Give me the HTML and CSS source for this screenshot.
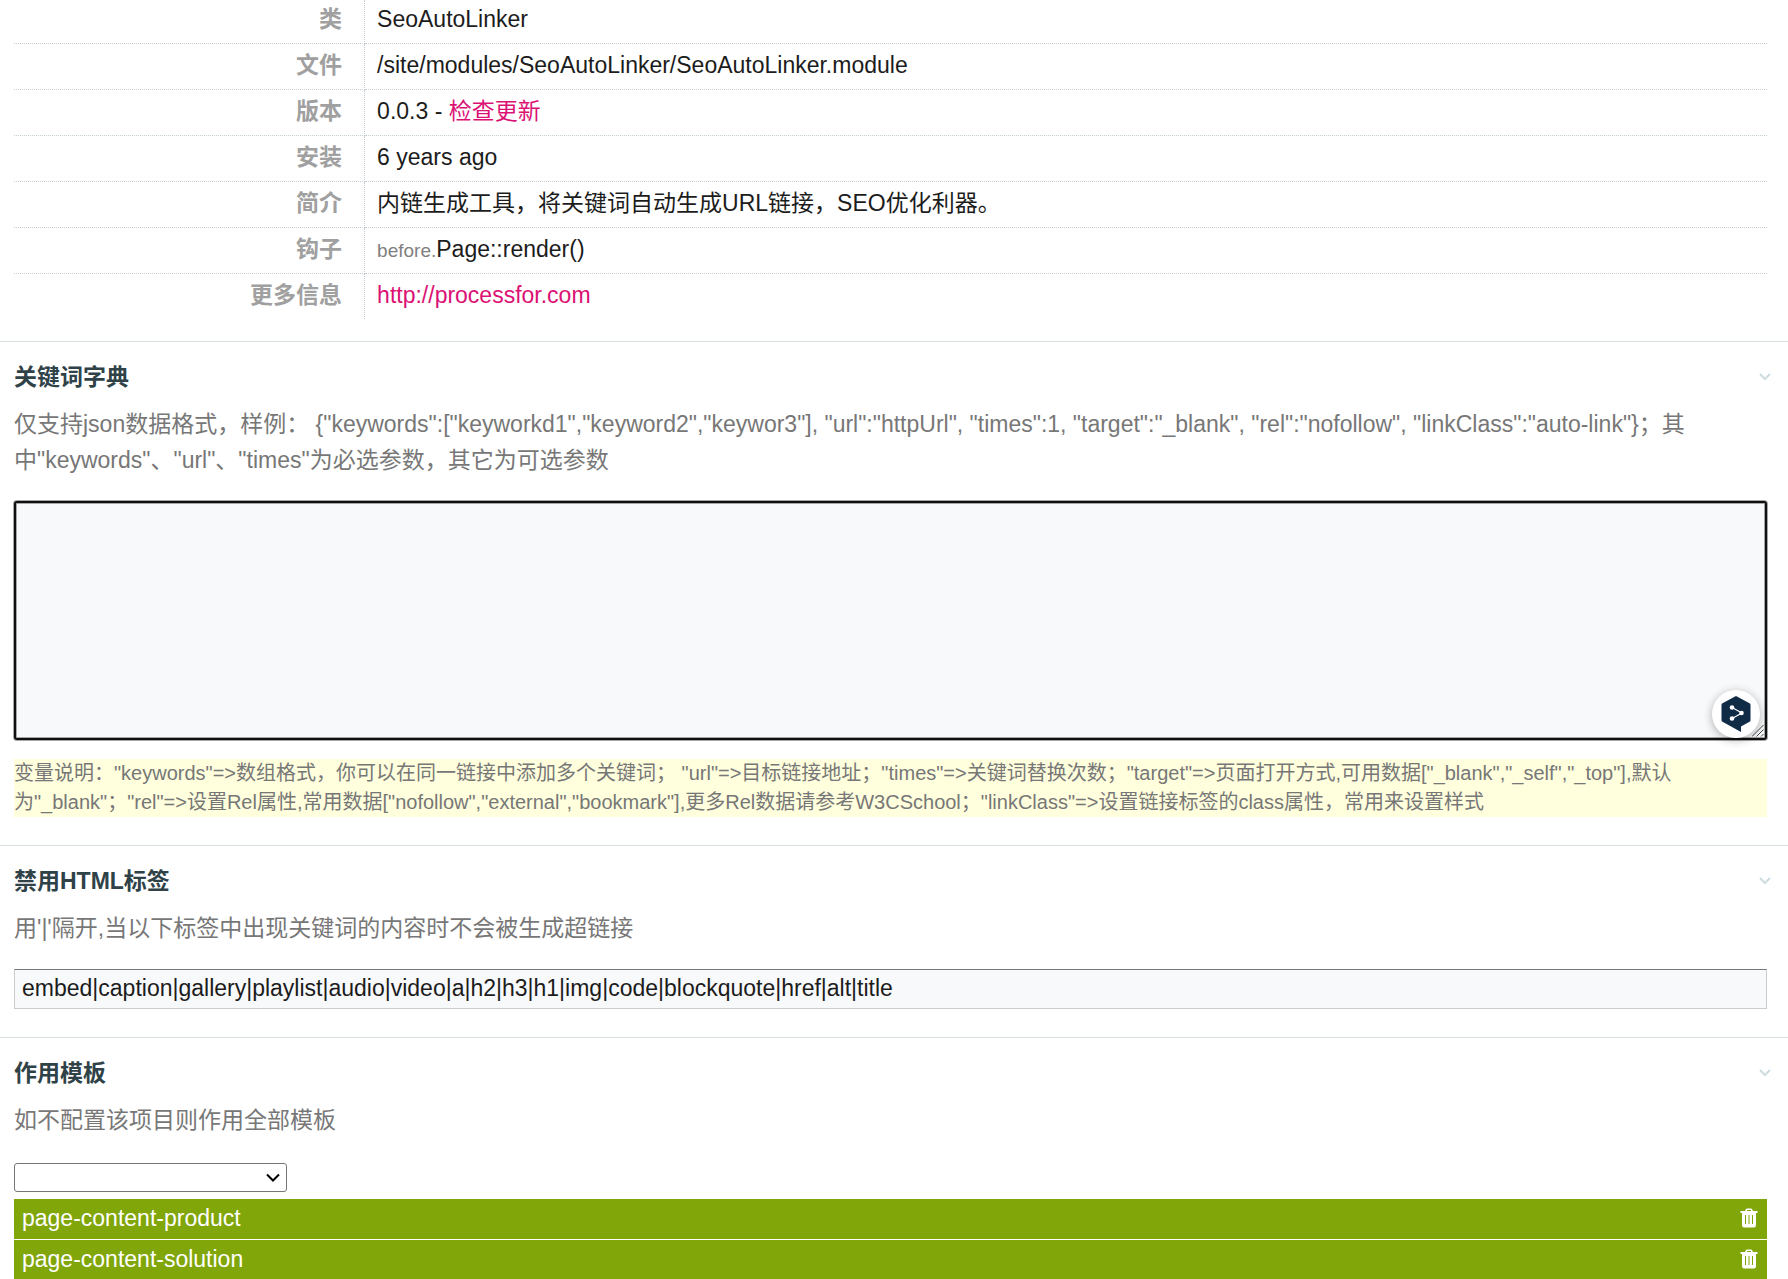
FILE: index.html
```html
<!DOCTYPE html>
<html lang="zh-CN">
<head>
<meta charset="utf-8">
<title>SeoAutoLinker</title>
<link rel="stylesheet" href="styles.css">
</head>
<body>
<main>
  <section class="info">
    <table class="info-table">
      <tbody>
        <tr><th scope="row">类</th><td>SeoAutoLinker</td></tr>
        <tr><th scope="row">文件</th><td>/site/modules/SeoAutoLinker/SeoAutoLinker.module</td></tr>
        <tr><th scope="row">版本</th><td>0.0.3 - <a href="#update">检查更新</a></td></tr>
        <tr><th scope="row">安装</th><td>6 years ago</td></tr>
        <tr><th scope="row">简介</th><td>内链生成工具，将关键词自动生成URL链接，SEO优化利器。</td></tr>
        <tr><th scope="row">钩子</th><td><span class="hook-type">before.</span>Page::render()</td></tr>
        <tr><th scope="row">更多信息</th><td><a href="http://processfor.com">http://processfor.com</a></td></tr>
      </tbody>
    </table>
  </section>

  <section class="field">
    <div class="field-head">
      <label for="keywords">关键词字典</label>
      <button class="toggle" type="button" aria-label="折叠"><svg viewBox="0 0 14 10" width="14" height="10"><path d="M2 2l5 5 5-5"/></svg></button>
    </div>
    <p class="description">仅支持json数据格式，样例： {"keywords":["keyworkd1","keyword2","keywor3"], "url":"httpUrl", "times":1, "target":"_blank", "rel":"nofollow", "linkClass":"auto-link"}；其中"keywords"、"url"、"times"为必选参数，其它为可选参数</p>
    <div class="editor">
      <textarea id="keywords"></textarea>
      <svg class="grip" viewBox="0 0 12 12" width="12" height="12"><path d="M0 11.500L11.500 0M4.500 11.500L11.500 4.500M9 11.500L11.500 9"/></svg>
      <button class="translate" type="button" aria-label="翻译">
        <svg viewBox="0 0 30 36" width="30" height="36"><path fill="#0f2b46" d="M15 0L29 7.500Q29.500 8 29.500 9V24Q29.500 25 29 25.500L20 30.500V36L11 31 1 25.500Q.5 25 .5 24V9Q.5 8 1 7.500Z"/><path d="M11 11.500L21 17 11 22.500" fill="none" stroke="#fff" stroke-width="1.200"/><g fill="#fff"><circle cx="11" cy="11.500" r="2.300"/><circle cx="20.500" cy="17" r="2.300"/><circle cx="11" cy="22.500" r="2.300"/></g></svg>
      </button>
    </div>
    <p class="notes">变量说明："keywords"=&gt;数组格式，你可以在同一链接中添加多个关键词； "url"=&gt;目标链接地址；"times"=&gt;关键词替换次数；"target"=&gt;页面打开方式,可用数据["_blank","_self","_top"],默认为"_blank"；"rel"=&gt;设置Rel属性,常用数据["nofollow","external","bookmark"],更多Rel数据请参考W3CSchool；"linkClass"=&gt;设置链接标签的class属性，常用来设置样式</p>
  </section>

  <section class="field">
    <div class="field-head">
      <label for="tags">禁用HTML标签</label>
      <button class="toggle" type="button" aria-label="折叠"><svg viewBox="0 0 14 10" width="14" height="10"><path d="M2 2l5 5 5-5"/></svg></button>
    </div>
    <p class="description">用'|'隔开,当以下标签中出现关键词的内容时不会被生成超链接</p>
    <input class="text-input" id="tags" type="text" value="embed|caption|gallery|playlist|audio|video|a|h2|h3|h1|img|code|blockquote|href|alt|title">
  </section>

  <section class="field field-last">
    <div class="field-head">
      <label for="templates">作用模板</label>
      <button class="toggle" type="button" aria-label="折叠"><svg viewBox="0 0 14 10" width="14" height="10"><path d="M2 2l5 5 5-5"/></svg></button>
    </div>
    <p class="description">如不配置该项目则作用全部模板</p>
    <div class="template-select">
      <select id="templates"><option></option></select>
      <svg viewBox="0 0 14 10" width="14" height="10"><path d="M1 1.500l6 6 6-6"/></svg>
    </div>
    <ul class="selected">
      <li>page-content-product <button class="remove" type="button" aria-label="删除"><svg viewBox="0 0 18 20" width="18" height="20"><use href="#trash"/></svg></button></li>
      <li>page-content-solution <button class="remove" type="button" aria-label="删除"><svg viewBox="0 0 18 20" width="18" height="20"><use href="#trash"/></svg></button></li>
    </ul>
  </section>
</main>
<svg class="symbols" width="0" height="0" aria-hidden="true">
  <symbol id="trash" viewBox="0 0 18 20"><path fill="currentColor" fill-rule="evenodd" d="M5 3L6 1Q6.400.5 7 .5H11Q11.600.5 12 1L13 3H17.500V5H16V17Q16 19.500 14 19.500H4Q2 19.500 2 17V5H.5V3ZM6.700 3H11.300L10.700 2H7.300ZM5 7V16H6V7ZM8.500 7V16H9.500V7ZM12 7V16H13V7Z"/></symbol>
</svg>
</body>
</html>
```
FILE: styles.css
```css
* {
  box-sizing: border-box;
}

body {
  margin: 0;
  background: #fff;
  color: #1c1c1c;
  font: 23px/36px "Liberation Sans", Arial, "Noto Sans CJK SC", sans-serif;
}

main {
  overflow: hidden;
}

a {
  color: #db1174;
  text-decoration: none;
}

button {
  padding: 0;
  border: 0;
  background: none;
  cursor: pointer;
}

svg {
  display: block;
}

.symbols {
  position: absolute;
}

.info {
  padding: 0 21px 22px 14px;
}

.info-table {
  width: 100%;
  table-layout: fixed;
  border-collapse: collapse;
}

.info-table th,
.info-table td {
  height: 46px;
  padding: 3px 12px 5px;
  border-bottom: 1px dotted #c3cfd2;
  text-align: left;
  vertical-align: middle;
}

.info-table th {
  width: 20%;
  padding-right: 22px;
  border-right: 1px dotted #c3cfd2;
  color: #a0a0a0;
  text-align: right;
}

.info-table tr:first-child > * {
  height: 43px;
  padding-top: 0;
}

.info-table tr:last-child > * {
  border-bottom: 0;
}

.hook-type {
  color: #808080;
  font-size: 19px;
  line-height: 1;
}

.field {
  padding: 17px 21px 28px 14px;
  border-top: 1px solid #d7e1e3;
}

.field-last {
  padding-bottom: 0;
}

.field-head {
  display: flex;
  align-items: center;
  justify-content: space-between;
  margin-bottom: 11px;
  color: #2f4248;
  font-weight: bold;
}

.toggle {
  margin-right: -5px;
}

.toggle path {
  fill: none;
  stroke: #cfdce2;
  stroke-width: 2;
}

.description {
  margin: 0 0 23px;
  color: #777;
}

.editor {
  position: relative;
  margin-bottom: 19px;
}

.editor textarea {
  display: block;
  width: 100%;
  height: 239px;
  border: 2px solid #101010;
  border-radius: 3px;
  outline: 0;
  background: #f8f9fb;
  box-shadow: 0 0 0 1px #a5a8a6, inset 0 0 0 1px #a5a8a6;
  resize: none;
}

.grip {
  position: absolute;
  right: 3px;
  bottom: 3px;
  pointer-events: none;
}

.grip path {
  fill: none;
  stroke: #444;
  stroke-width: 1;
}

.translate {
  position: absolute;
  right: 7px;
  bottom: 2px;
  display: grid;
  place-items: center;
  width: 48px;
  height: 48px;
  border-radius: 50%;
  background: #fff;
  box-shadow: 0 2px 10px rgba(0, 0, 0, .3);
}

.notes {
  margin: 0;
  background: #ffffdd;
  color: #777;
  font-size: 20px;
  line-height: 29px;
}

.text-input {
  display: block;
  width: 100%;
  height: 40px;
  padding: 0 7px 2px;
  border: 1px solid #ccc;
  border-top-color: #777;
  background: #f8f9fb;
  color: inherit;
  font: inherit;
}

.template-select {
  display: grid;
  align-items: center;
  width: 273px;
  margin-top: 25px;
}

.template-select > * {
  grid-area: 1 / 1;
}

.template-select select {
  appearance: none;
  width: 100%;
  height: 29px;
  border: 1px solid #767676;
  border-radius: 3px;
  background: #fff;
}

.template-select svg {
  justify-self: end;
  margin-right: 7px;
  pointer-events: none;
}

.template-select path {
  fill: none;
  stroke: #000;
  stroke-width: 2;
}

.selected {
  margin: 7px 0 0;
  padding: 0;
  list-style: none;
}

.selected li {
  display: flex;
  align-items: center;
  justify-content: space-between;
  height: 40px;
  margin-bottom: 1px;
  padding: 0 9px 2px 8px;
  background: #81a60a;
  color: #fff;
}

.remove {
  color: #fff;
}
```
